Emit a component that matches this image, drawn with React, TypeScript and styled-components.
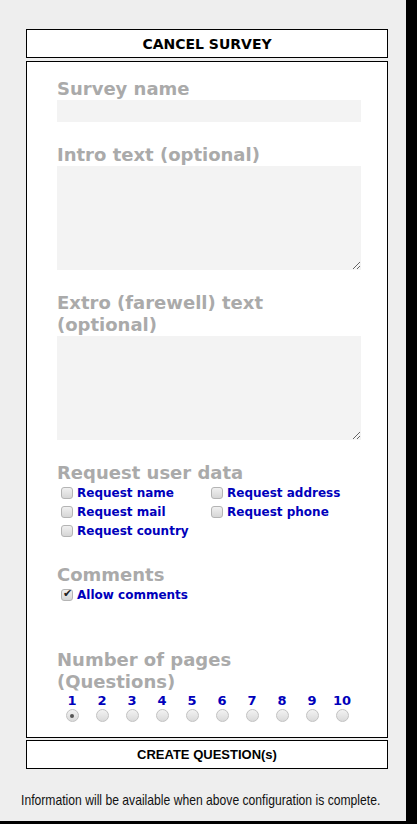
import React from 'react';
import styled, { createGlobalStyle } from 'styled-components';

const GlobalStyle = createGlobalStyle`
  html, body {
    margin: 0;
    padding: 0;
    background: #000;
  }
`;

const Page = styled.div`
  width: 406px;
  min-height: 821px;
  background: #eeeeee;
  box-sizing: border-box;
  padding: 29px 18px 0 26px;
  display: flex;
  flex-direction: column;
`;

const BoxButton = styled.button<{ $arial?: boolean }>`
  display: block;
  width: 362px;
  height: 29px;
  margin: 0;
  padding: 0;
  border: 1px solid #000;
  background: #fff;
  color: #000;
  font-family: ${(p) => (p.$arial ? '"Liberation Sans", Arial, sans-serif' : '"DejaVu Sans", Verdana, sans-serif')};
  font-weight: bold;
  font-size: ${(p) => (p.$arial ? 13 : 14)}px;
  cursor: pointer;
`;

const Form = styled.div`
  width: 362px;
  box-sizing: border-box;
  margin: 3px 0 2px;
  border: 1px solid #000;
  background: #fff;
  padding: 16px 26px 15px 30px;
  font-family: "DejaVu Sans", Verdana, sans-serif;
`;

const Section = styled.div<{ $gap?: number }>`
  margin-bottom: ${(p) => p.$gap ?? 22}px;
`;

const Label = styled.div`
  max-width: 280px;
  color: #aaaaaa;
  font-weight: bold;
  font-size: 18px;
  line-height: 22px;
`;

const TextInput = styled.input`
  display: block;
  width: 304px;
  height: 22px;
  box-sizing: border-box;
  border: none;
  background: #f3f3f3;
  margin: 0;
  outline: none;
`;

const TextArea = styled.textarea`
  display: block;
  width: 304px;
  height: 104px;
  box-sizing: border-box;
  border: none;
  background: #f3f3f3;
  margin: 0;
  outline: none;
`;

const CheckGrid = styled.div`
  display: grid;
  grid-template-columns: 150px 150px;
  margin-top: -1px;
  padding-left: 4px;
`;

const CheckRow = styled.label`
  display: flex;
  align-items: center;
  gap: 4px;
  height: 19px;
  color: #0000bb;
  font-weight: bold;
  font-size: 12px;
`;

const CheckBox = styled.input`
  appearance: none;
  width: 12px;
  height: 12px;
  margin: 0;
  border: 1px solid #b4b4b4;
  border-radius: 3px;
  background: linear-gradient(#f0f0f0, #d6d6d6);
  position: relative;
  flex: none;
  &:checked::after {
    content: '✔';
    position: absolute;
    left: 1px;
    top: -3px;
    font-size: 11px;
    color: #222;
  }
`;

const PagesRow = styled.div`
  display: grid;
  grid-template-columns: repeat(10, 30px);
`;

const PageOption = styled.label`
  display: flex;
  flex-direction: column;
  align-items: center;
  color: #0000bb;
  font-weight: bold;
  font-size: 13px;
  line-height: 15px;
  gap: 1px;
`;

const Radio = styled.input`
  appearance: none;
  width: 13px;
  height: 13px;
  margin: 0;
  border: 1px solid #c2c2c2;
  border-radius: 50%;
  background: linear-gradient(#f2f2f2, #dadada);
  position: relative;
  &:checked::after {
    content: '';
    position: absolute;
    left: 3.5px;
    top: 3.5px;
    width: 4px;
    height: 4px;
    border-radius: 50%;
    background: #555;
  }
`;

const InfoLine = styled.div`
  margin: 22px 0 0 -5px;
  width: 385px;
  height: 17px;
  overflow: hidden;
`;

const InfoText = styled.span`
  display: inline-block;
  font-family: "Liberation Sans", Arial, sans-serif;
  font-size: 15px;
  line-height: 17px;
  color: #111;
  white-space: nowrap;
  transform: scaleX(0.81);
  transform-origin: left center;
`;

const userFields = [
  'Request name',
  'Request address',
  'Request mail',
  'Request phone',
  'Request country',
];

export default function App() {
  return (
    <>
      <GlobalStyle />
      <Page>
        <BoxButton>CANCEL SURVEY</BoxButton>
        <Form>
          <Section>
            <Label>Survey name</Label>
            <TextInput type="text" />
          </Section>
          <Section>
            <Label>Intro text (optional)</Label>
            <TextArea />
          </Section>
          <Section>
            <Label>Extro (farewell) text (optional)</Label>
            <TextArea />
          </Section>
          <Section $gap={24}>
            <Label>Request user data</Label>
            <CheckGrid>
              {userFields.map((f) => (
                <CheckRow key={f}>
                  <CheckBox type="checkbox" />
                  {f}
                </CheckRow>
              ))}
            </CheckGrid>
          </Section>
          <Section $gap={45}>
            <Label>Comments</Label>
            <CheckGrid>
              <CheckRow>
                <CheckBox type="checkbox" defaultChecked />
                Allow comments
              </CheckRow>
            </CheckGrid>
          </Section>
          <Section $gap={0}>
            <Label>Number of pages (Questions)</Label>
            <PagesRow>
              {Array.from({ length: 10 }, (_, i) => (
                <PageOption key={i}>
                  {i + 1}
                  <Radio type="radio" name="pages" defaultChecked={i === 0} />
                </PageOption>
              ))}
            </PagesRow>
          </Section>
        </Form>
        <BoxButton $arial>CREATE QUESTION(s)</BoxButton>
        <InfoLine>
          <InfoText>Information will be available when above configuration is complete.</InfoText>
        </InfoLine>
      </Page>
    </>
  );
}
